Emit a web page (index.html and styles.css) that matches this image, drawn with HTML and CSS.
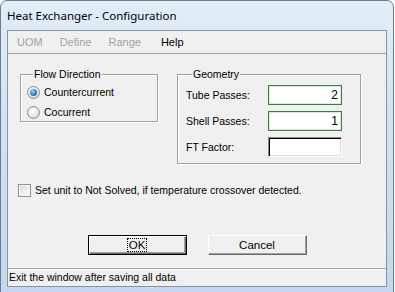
FILE: index.html
```html
<!DOCTYPE html>
<html lang="en">
<head>
    <meta charset="UTF-8">
    <title>Heat Exchanger - Configuration</title>
    <link rel="stylesheet" href="styles.css">
</head>
<body>
    <div class="window">
        <div class="titlebar">Heat Exchanger - Configuration</div>
        <div class="client">
            <!-- Menu -->
            <div class="menubar">
                <span class="menu-item disabled">UOM</span>
                <span class="menu-item disabled">Define</span>
                <span class="menu-item disabled">Range</span>
                <span class="menu-item help">Help</span>
            </div>

            <div class="dialog-body">
                <div class="groups">
                    <fieldset class="group group-flow">
                        <legend>Flow Direction</legend>
                        <label class="radio-row"><span class="radio checked"></span>Countercurrent</label>
                        <label class="radio-row"><span class="radio"></span>Cocurrent</label>
                    </fieldset>

                    <fieldset class="group group-geometry">
                        <legend>Geometry</legend>
                        <div class="field-row">
                            <span class="field-label">Tube Passes:</span>
                            <span class="textbox green">2</span>
                        </div>
                        <div class="field-row">
                            <span class="field-label">Shell Passes:</span>
                            <span class="textbox green">1</span>
                        </div>
                        <div class="field-row">
                            <span class="field-label">FT Factor:</span>
                            <span class="textbox sunken"></span>
                        </div>
                    </fieldset>
                </div>

                <label class="check-row"><span class="checkbox"></span>Set unit to Not Solved, if temperature crossover detected.</label>

                <div class="buttons">
                    <button class="btn default"><span class="focus">OK</span></button>
                    <button class="btn">Cancel</button>
                </div>
            </div>

            <div class="statusbar">Exit the window after saving all data</div>
        </div>
    </div>
</body>
</html>
```

FILE: styles.css
```css
html, body {
    margin: 0;
    padding: 0;
    background: #fff;
}
body {
    width: 395px;
    height: 292px;
    overflow: hidden;
}
.window {
    box-sizing: border-box;
    width: 394px;
    height: 294px;
    padding: 0 6px 6px 6px;
    border: 1px solid #6d7d8e;
    border-radius: 7px 7px 0 0;
    background: linear-gradient(180deg, #e3edf8 0%, #d2e2f3 40%, #c3d8ee 100%);
    display: flex;
    flex-direction: column;
}
.titlebar {
    height: 29px;
    line-height: 29px;
    font-family: "Noto Sans", sans-serif;
    font-size: 11.5px;
    color: #000;
}
.client {
    flex: 1;
    display: flex;
    flex-direction: column;
    background: #f0f0f0;
    border: 1px solid #8394a6;
    font-family: "Liberation Sans", Arial, sans-serif;
    font-size: 10.5px;
    color: #000;
}
.menubar {
    height: 22px;
    display: flex;
    align-items: center;
    padding-left: 9px;
    border-bottom: 1px solid #a0a0a0;
    font-size: 11px;
}
.menu-item {
    margin-right: 17px;
}
.menu-item.disabled {
    color: #a3a3a3;
}
.menu-item.help {
    margin-left: 3px;
}
.dialog-body {
    flex: 1;
    padding: 14px 0 0 12px;
}
.groups {
    display: flex;
    align-items: flex-start;
    gap: 19px;
}
.group {
    margin: 0;
    padding: 0;
    border: 1px solid #a0a0a0;
    box-shadow: inset 1px 1px 0 #fff, 1px 1px 0 #fff;
}
.group legend {
    margin-left: 6px;
    padding: 0 1px;
    line-height: 13px;
    background: #f0f0f0;
}
.group-flow {
    width: 138px;
    height: 54px;
    box-sizing: border-box;
    padding: 1px 0 0 6px;
}
.radio-row {
    display: flex;
    align-items: center;
    gap: 4px;
    height: 20px;
}
.radio {
    box-sizing: border-box;
    width: 13px;
    height: 13px;
    border-radius: 50%;
    border: 1px solid #8b8b8b;
    background: radial-gradient(circle at 40% 35%, #ffffff 0%, #e6e6e6 55%, #cfcfcf 100%);
    display: flex;
    align-items: center;
    justify-content: center;
}
.radio.checked::after {
    content: "";
    width: 7px;
    height: 7px;
    border-radius: 50%;
    background: radial-gradient(circle at 40% 35%, #a9dbf8 0%, #3d8cc4 45%, #184f7e 100%);
}
.group-geometry {
    width: 184px;
    height: 96px;
    box-sizing: border-box;
    padding: 4px 0 0 8px;
}
.field-row {
    display: flex;
    align-items: center;
    height: 20px;
    margin-bottom: 6px;
}
.field-label {
    width: 82px;
}
.textbox {
    box-sizing: border-box;
    width: 74px;
    height: 20px;
    background: #fff;
    text-align: right;
    padding-right: 3px;
    font-size: 12px;
    line-height: 18px;
}
.textbox.green {
    border: 1px solid #3f7d3f;
    box-shadow: inset 0 0 0 1px #d9ead9;
}
.textbox.sunken {
    border-style: solid;
    border-width: 1px;
    border-color: #8c8c8c #fff #fff #8c8c8c;
    box-shadow: inset 1px 1px 0 #000, inset -1px -1px 0 #e3e3e3;
}
.check-row {
    display: flex;
    align-items: center;
    gap: 4px;
    margin: 19px 0 0 -2px;
    height: 14px;
}
.checkbox {
    box-sizing: border-box;
    width: 13px;
    height: 13px;
    border: 1px solid #8e8f8f;
    background: linear-gradient(135deg, #d6d6d6 0%, #f4f4f4 70%, #fff 100%);
    box-shadow: inset 0 0 0 1px #f8f8f8;
}
.buttons {
    display: flex;
    justify-content: center;
    gap: 21px;
    margin-top: 38px;
    margin-left: -12px;
}
.btn {
    box-sizing: border-box;
    width: 99px;
    height: 20px;
    padding: 0;
    background: #f0f0f0;
    font-family: "Liberation Sans", Arial, sans-serif;
    font-size: 11.5px;
    color: #000;
    border-style: solid;
    border-width: 1px;
    border-color: #fff #696969 #696969 #fff;
    box-shadow: inset -1px -1px 0 #a0a0a0;
}
.btn.default {
    border: 1px solid #000;
    box-shadow: inset 1px 1px 0 #fff, inset -1px -1px 0 #696969, inset -2px -2px 0 #a0a0a0;
}
.focus {
    outline: 1px dotted #000;
    outline-offset: 0;
    padding: 0 1px;
}
.statusbar {
    height: 17px;
    line-height: 17px;
    border-top: 1px solid #a0a0a0;
    box-shadow: inset 0 1px 0 #fff;
    padding-left: 1px;
    font-size: 10.5px;
}
```
